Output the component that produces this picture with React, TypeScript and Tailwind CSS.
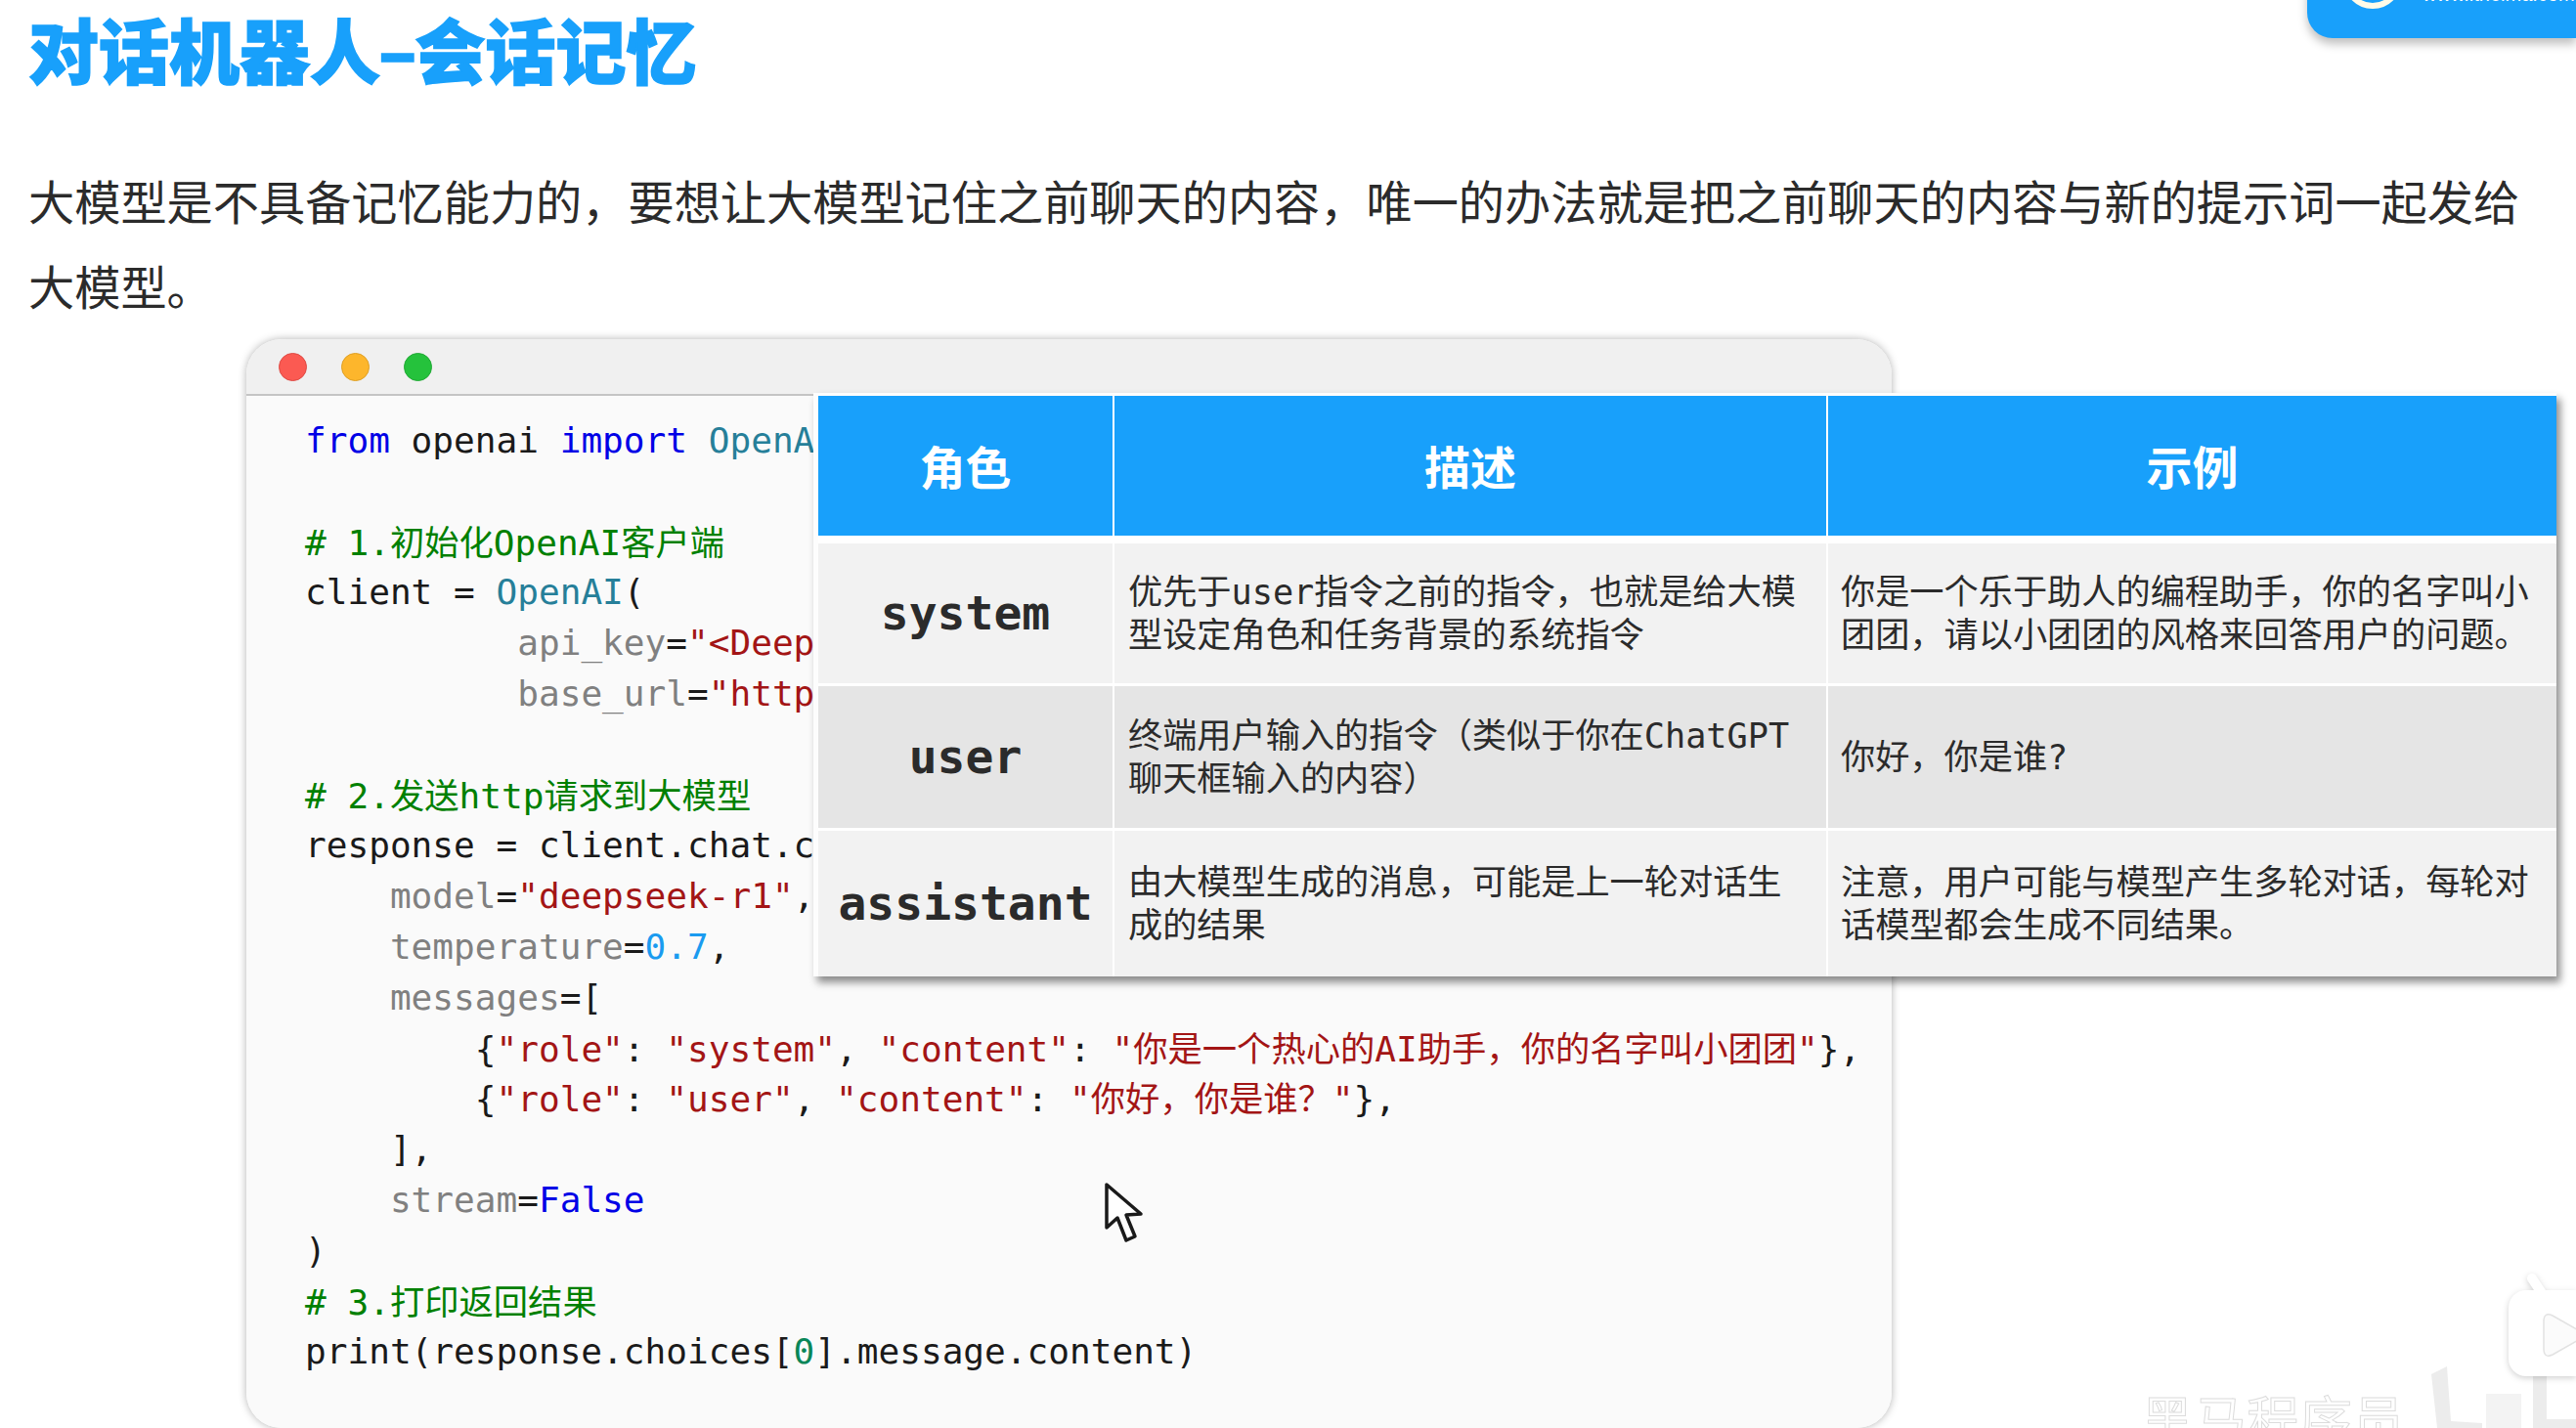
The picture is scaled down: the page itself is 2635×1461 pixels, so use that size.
import React from "react";

const mono = "font-['DejaVu_Sans_Mono','Noto_Sans_CJK_SC',monospace]";
const K = ({ children }: { children: React.ReactNode }) => <span className="text-[#0000e6]">{children}</span>;
const T = ({ children }: { children: React.ReactNode }) => <span className="text-[#267f99]">{children}</span>;
const C = ({ children }: { children: React.ReactNode }) => <span className="text-[#008000]">{children}</span>;
const Z = ({ children }: { children: React.ReactNode }) => <span className="text-[35.3px]">{children}</span>;
const S = ({ children }: { children: React.ReactNode }) => <span className="text-[#a31515]">{children}</span>;
const P = ({ children }: { children: React.ReactNode }) => <span className="text-[#808080]">{children}</span>;
const N = ({ children }: { children: React.ReactNode }) => <span className="text-[#1a9bf0]">{children}</span>;

function Line({ indent = 0, children }: { indent?: number; children?: React.ReactNode }) {
  return (
    <div className="h-[51.8px] whitespace-pre">
      {" ".repeat(indent)}
      {children}
    </div>
  );
}

function Code() {
  return (
    <div className={`${mono} bg-[#fafafa] pl-[60px] pt-[21px] h-[1056px] text-[36.1px] leading-[51.8px] text-[#1a1a1a]`}>
      <Line><K>from</K> openai <K>import</K> <T>OpenAI</T></Line>
      <Line />
      <Line><C># 1.<Z>初始化</Z>OpenAI<Z>客户端</Z></C></Line>
      <Line>client = <T>OpenAI</T>(</Line>
      <Line indent={10}><P>api_key</P>=<S>"&lt;DeepSeek API Key&gt;"</S>,</Line>
      <Line indent={10}><P>base_url</P>=<S>"https://api.deepseek.com"</S></Line>
      <Line />
      <Line><C># 2.<Z>发送</Z>http<Z>请求到大模型</Z></C></Line>
      <Line>response = client.chat.completions.create(</Line>
      <Line indent={4}><P>model</P>=<S>"deepseek-r1"</S>,</Line>
      <Line indent={4}><P>temperature</P>=<N>0.7</N>,</Line>
      <Line indent={4}><P>messages</P>=[</Line>
      <Line indent={8}>{"{"}<S>"role"</S>: <S>"system"</S>, <S>"content"</S>: <S>"<Z>{"你是一个热心的"}</Z>AI<Z>{"助手\uFF0C你的名字叫小团团"}</Z>"</S>{"},"}</Line>
      <Line indent={8}>{"{"}<S>"role"</S>: <S>"user"</S>, <S>"content"</S>: <S>"<Z>{"你好\uFF0C你是谁\uFF1F"}</Z>"</S>{"},"}</Line>
      <Line indent={4}>],</Line>
      <Line indent={4}><P>stream</P>=<K>False</K></Line>
      <Line>)</Line>
      <Line><C># 3.<Z>打印返回结果</Z></C></Line>
      <Line>print(response.choices[<span className="text-[#098658]">0</span>].message.content)</Line>
    </div>
  );
}

const rows = [
  {
    role: "system",
    bg: "bg-[#f2f2f2]",
    h: "h-[143px]",
    desc: "优先于user指令之前的指令\uFF0C也就是给大模型设定角色和任务背景的系统指令",
    ex: "你是一个乐于助人的编程助手\uFF0C你的名字叫小团团\uFF0C请以小团团的风格来回答用户的问题\u3002",
  },
  {
    role: "user",
    bg: "bg-[#e5e5e5]",
    h: "h-[145px]",
    desc: "终端用户输入的指令\uFF08类似于你在ChatGPT聊天框输入的内容\uFF09",
    ex: "你好\uFF0C你是谁?",
  },
  {
    role: "assistant",
    bg: "bg-[#f2f2f2]",
    h: "h-[149px]",
    desc: "由大模型生成的消息\uFF0C可能是上一轮对话生成的结果",
    ex: "注意\uFF0C用户可能与模型产生多轮对话\uFF0C每轮对话模型都会生成不同结果\u3002",
  },
];

function RoleTable() {
  return (
    <div className={`${mono} absolute left-[832px] top-[402px] w-[1783px] border-l-[5px] border-t-[3px] border-[#fdfdfd] bg-white shadow-[4px_6px_8px_rgba(0,0,0,0.45)]`}>
      <div className="grid grid-cols-[301px_728px_745px] gap-x-[2px] mb-[8px]">
        {["角色", "描述", "示例"].map((h) => (
          <div key={h} className="h-[143px] pt-[7px] bg-[#18a0fb] flex items-center justify-center text-white text-[47px] font-bold">
            {h}
          </div>
        ))}
      </div>
      <div className="flex flex-col gap-[3px]">
        {rows.map((r) => (
          <div key={r.role} className={`grid grid-cols-[301px_728px_745px] gap-x-[2px] ${r.h}`}>
            <div className={`${r.bg} flex items-center justify-center pb-[2px] text-[48px] font-bold text-[#2b2b2b]`}>{r.role}</div>
            <div className={`${r.bg} flex items-center pl-[14px] pr-[14px] text-[35.2px] leading-[43.7px] text-[#2b2b2b]`}>
              <span>{r.desc}</span>
            </div>
            <div className={`${r.bg} flex items-center pl-[13px] pr-[13px] text-[35.2px] leading-[43.7px] text-[#2b2b2b]`}>
              <span>{r.ex}</span>
            </div>
          </div>
        ))}
      </div>
    </div>
  );
}

export default function App() {
  return (
    <div className="relative w-[2635px] h-[1461px] overflow-hidden bg-white font-['Noto_Sans_CJK_SC',sans-serif]">
      <div className="pl-[29px] pt-[5px]">
        <h1 className="h-[90px] text-[72px] leading-[88px] font-black text-[#18a0fb] [-webkit-text-stroke:1.5px_#18a0fb] whitespace-pre">
          对话机器人<span className="mx-[-2px]">–</span>会话记忆
        </h1>
        <p className="mt-[66px] w-[2570px] text-[47.2px] leading-[87px] text-[#2b2b2b]">
          {"大模型是不具备记忆能力的\uFF0C要想让大模型记住之前聊天的内容\uFF0C唯一的办法就是把之前聊天的内容与新的提示词一起发给大模型\u3002"}
        </p>
      </div>

      <div className="ml-[252px] mt-[12px] w-[1683px] rounded-[36px] overflow-hidden shadow-[0_0_8px_rgba(0,0,0,0.3)]">
        <div className="h-[58px] bg-[#f0f0f0] border-b-2 border-[#c4c4c4] flex items-center gap-[35px] pl-[33px]">
          <span className="w-[29px] h-[29px] rounded-full bg-[#fb5a52] border border-[#dd4a44]" />
          <span className="w-[29px] h-[29px] rounded-full bg-[#fdb62c] border border-[#dd9f26]" />
          <span className="w-[29px] h-[29px] rounded-full bg-[#25c23c] border border-[#20a834]" />
        </div>
        <Code />
      </div>

      <RoleTable />

      <svg className="absolute left-[1129px] top-[1209px]" width="44" height="64" viewBox="0 0 44 64">
        <path d="M3 3 L3 47 L14 37 L23 60 L32 56 L23 34 L38 33 Z" fill="#ffffff" stroke="#1a1a1a" strokeWidth="3.5" strokeLinejoin="round" />
      </svg>

      <div className="absolute right-0 top-[-60px] w-[275px] h-[99px] rounded-bl-[26px] bg-[#18a0fb] shadow-[0_6px_10px_rgba(0,0,0,0.25)] flex pl-[37px] gap-[21px] overflow-hidden">
        <span className="shrink-0 w-[60px] h-[60px] mt-[9px] rounded-full border-[6px] border-[#fffbe8]" />
        <span className="mt-[42px] text-[20px] leading-[24px] text-white whitespace-nowrap font-['Liberation_Sans',sans-serif]">www.itheima.com</span>
      </div>

      <span className="absolute left-[2190px] top-[1416px] text-[54px] leading-[70px] text-white [-webkit-text-stroke:1px_#dcdcdc] whitespace-nowrap">
        黑马程序员
      </span>

      <svg className="absolute left-[2487px] top-[1398px]" width="148" height="63" viewBox="0 0 148 63">
        <path d="M0 8 L16 0 L20 56 L52 58 L52 63 L6 63 Z" fill="#ececec" />
        <path d="M56 28 h36 v35 h-36 Z" fill="#f3f3f3" />
        <path d="M104 10 h14 v44 h30 v9 h-44 Z" fill="#ececec" />
      </svg>

      <svg className="absolute left-[2556px] top-[1296px] drop-shadow-[0_2px_3px_rgba(0,0,0,0.18)]" width="79" height="120" viewBox="0 0 79 120">
        <path d="M34 12 L46 30" stroke="#ffffff" strokeWidth="10" strokeLinecap="round" />
        <rect x="10" y="24" width="110" height="88" rx="18" fill="#ffffff" />
        <path d="M46 56 Q46 46 55 50 L90 70 L55 90 Q46 94 46 84 Z" fill="#fbfbfb" stroke="#e2e2e2" strokeWidth="1.5" />
      </svg>
    </div>
  );
}
